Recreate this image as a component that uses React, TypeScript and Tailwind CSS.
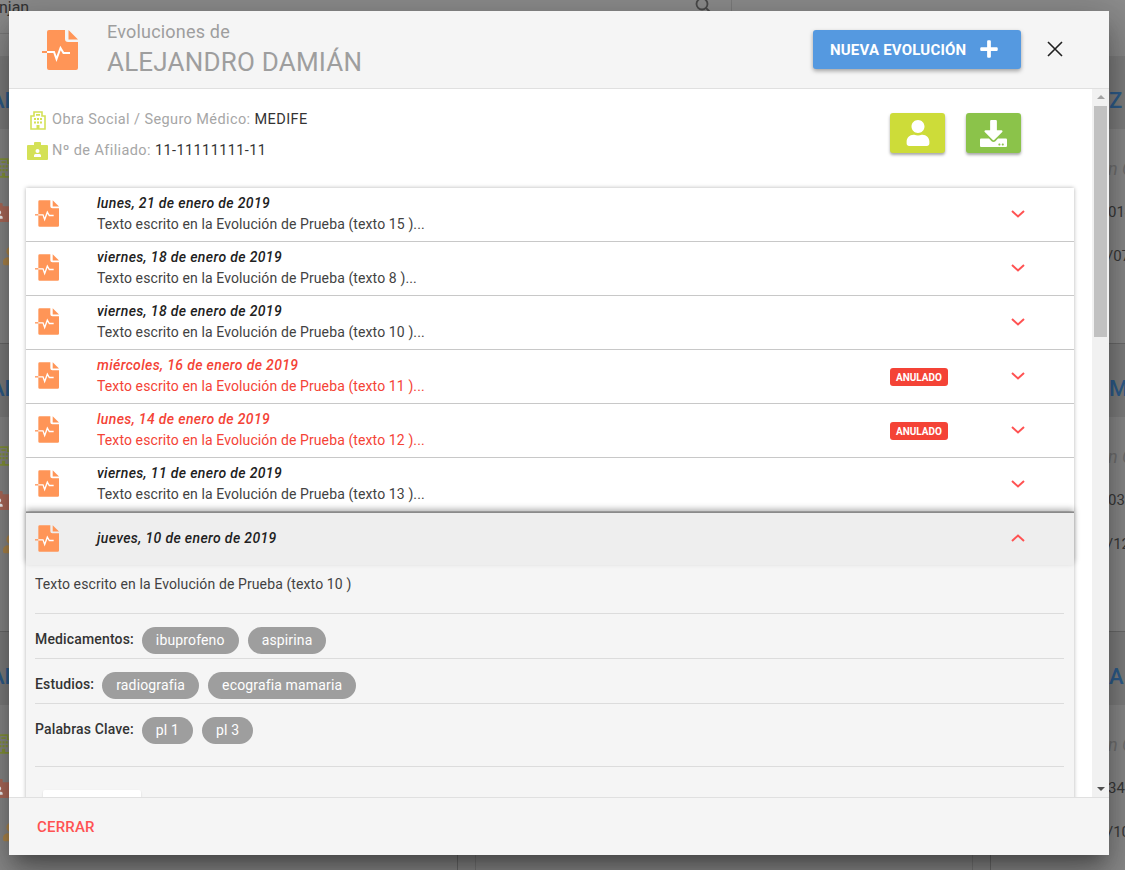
import React from "react";
import { FaDownload, FaUser, FaPlus } from "react-icons/fa";

const font = { fontFamily: "Roboto, 'Liberation Sans', sans-serif" };

function EvoIcon({ className }: { className: string }) {
  return (
    <svg viewBox="0 0 36 40" className={className}>
      <path fill="#ff9557" d="M7 0H23V9a3 3 0 0 0 3 3H36V38a2 2 0 0 1-2 2H7a2 2 0 0 1-2-2V2a2 2 0 0 1 2-2Z" />
      <path fill="#ff9557" d="M26.500 0 36 9.500H26.500Z" />
      <path fill="none" stroke="#ff9557" strokeWidth="2" d="M0 22H5" />
      <path fill="none" stroke="#ffffff" strokeWidth="2" d="M5 22H12L14.500 29 18.500 18 21.500 23H28" />
    </svg>
  );
}

function Building({ className, color }: { className: string; color: string }) {
  return (
    <svg viewBox="0 0 16 19" className={className}>
      <path fill="none" stroke={color} strokeWidth="1.600" d="M1 18V5H4V1H12V5H15V18Z" />
      <path fill={color} d="M4 7h2v2H4zM7 7h2v2H7zM10 7h2v2h-2zM4 10.500h2v2H4zM7 10.500h2v2H7zM10 10.500h2v2h-2zM6.500 14h3v4h-3zM6 3h4v1.800H6z" />
    </svg>
  );
}

function Badge({ className, color }: { className: string; color: string }) {
  return (
    <svg viewBox="0 0 21 18" className={className}>
      <path fill={color} d="M1 3H7V1a1 1 0 0 1 1-1h5a1 1 0 0 1 1 1V3H20a1 1 0 0 1 1 1V17a1 1 0 0 1-1 1H1a1 1 0 0 1-1-1V4a1 1 0 0 1 1-1Z" />
      <circle cx="10.500" cy="9" r="2" fill="#ffffff" />
      <path fill="#ffffff" d="M7 15v-1.500a1.500 1.500 0 0 1 1.500-1.500h4a1.500 1.500 0 0 1 1.500 1.500V15Z" />
    </svg>
  );
}

function Chevron({ up }: { up?: boolean }) {
  return (
    <svg viewBox="0 0 14 8" className="w-[14px] h-[8px]">
      <path fill="none" stroke="#ff5252" strokeWidth="2" d={up ? "M1 7 7 1.500 13 7" : "M1 1 7 6.500 13 1"} />
    </svg>
  );
}

type Item = { date: string; text: string; red?: boolean };
const items: Item[] = [
  { date: "lunes, 21 de enero de 2019", text: "Texto escrito en la Evolución de Prueba (texto 15 )..." },
  { date: "viernes, 18 de enero de 2019", text: "Texto escrito en la Evolución de Prueba (texto 8 )..." },
  { date: "viernes, 18 de enero de 2019", text: "Texto escrito en la Evolución de Prueba (texto 10 )..." },
  { date: "miércoles, 16 de enero de 2019", text: "Texto escrito en la Evolución de Prueba (texto 11 )...", red: true },
  { date: "lunes, 14 de enero de 2019", text: "Texto escrito en la Evolución de Prueba (texto 12 )...", red: true },
  { date: "viernes, 11 de enero de 2019", text: "Texto escrito en la Evolución de Prueba (texto 13 )..." },
];

function Row({ item }: { item: Item }) {
  return (
    <div className="h-[54px] flex items-start border-b border-[#c8c8c8] last:border-b-0 bg-white">
      <EvoIcon className="w-[24px] h-[27px] ml-[9px] mt-[12px] shrink-0" />
      <div className={`ml-[38px] w-[793px] shrink-0 pt-[5px] text-[14px] leading-[21px] tracking-[0.11px] ${item.red ? "text-[#f44336]" : "text-[#424242]"}`}>
        <div className={`italic font-medium tracking-[0.36px] ${item.red ? "" : "text-[#212121]"}`}>{item.date}</div>
        <div>{item.text}</div>
      </div>
      <div className="w-[121px] shrink-0 pt-[18px]">
        {item.red && (
          <span className="flex items-center justify-center w-[58px] h-[18px] rounded-[3px] bg-[#f44336] text-white text-[10px] font-bold">ANULADO</span>
        )}
      </div>
      <div className="pt-[22px] flex"><Chevron /></div>
    </div>
  );
}

function Chip({ children }: { children: React.ReactNode }) {
  return <span className="h-[27px] px-[14px] rounded-[14px] bg-[#9e9e9e] text-white text-[14px] tracking-[0.15px] flex items-center">{children}</span>;
}

function TagRow({ label, tags, h, last }: { label: string; tags: string[]; h: string; last?: boolean }) {
  return (
    <div className={`${h} flex items-start pt-[13px] ${last ? "" : "border-b border-[#dcdcdc]"}`}>
      <span className="text-[14px] font-medium tracking-[0.15px] text-[#333333] leading-[24px] mr-[8px]">{label}</span>
      <div className="flex gap-[9px]">{tags.map((t) => <Chip key={t}>{t}</Chip>)}</div>
    </div>
  );
}

function LeftCard() {
  return (
    <div className="h-[288px] border-b border-[#6e6e6e] border-r overflow-hidden">
      <div className="h-[73px] pt-[32px] bg-[#828282] text-[#2f5f8f] text-[22px] font-medium leading-[26px] -ml-[10px]">AL</div>
      <div className="mt-[17px] flex flex-col">
        <div className="h-[44px] flex items-center -ml-[5px]"><Building className="w-[17px] h-[20px]" color="#8b9a3c" /></div>
        <div className="h-[44px] flex items-center -ml-[12px]"><Badge className="w-[22px] h-[19px]" color="#b56f5e" /></div>
        <div className="h-[44px] flex items-center ml-[3px]"><FaUser className="w-[16px] h-[20px] text-[#b58c4e]" /></div>
      </div>
    </div>
  );
}

function RightCard({ title, a, b }: { title: string; a: string; b: string }) {
  return (
    <div className="h-[288px] border-b border-[#6e6e6e] border-l overflow-hidden">
      <div className="h-[73px] pt-[32px] pl-[118px] bg-[#828282] text-[#2f5f8f] text-[22px] font-medium leading-[26px] whitespace-nowrap">{title}</div>
      <div className="mt-[17px] pl-[117px] text-[15px] text-[#3a3a3a] whitespace-nowrap">
        <div className="h-[44px] flex items-center italic text-[#737373] text-[18px]">n C</div>
        <div className="h-[44px] flex items-center">{a}</div>
        <div className="h-[44px] flex items-center -ml-[1px]">{b}</div>
      </div>
    </div>
  );
}

export default function App() {
  return (
    <div style={font} className="relative w-[1125px] h-[870px] overflow-hidden bg-[#8d8d8d]">
      <div className="h-[56px] flex items-start">
        <div className="w-[732px] h-[34px] border-r border-b border-[#7c7c7c] flex justify-between pr-[20px]">
          <span className="-ml-[1px] text-[16px] leading-[16px] text-[#333333]">njan</span>
          <svg viewBox="0 0 16 16" className="w-[16px] h-[16px] -mt-[3px]">
            <circle cx="7" cy="7" r="5.500" fill="none" stroke="#4a4a4a" strokeWidth="1.800" />
            <path d="M11 11 15 15" stroke="#4a4a4a" strokeWidth="1.800" />
          </svg>
        </div>
      </div>
      <div className="grid grid-cols-[458px_1fr_135px] gap-x-[17px]">
        <div>
          <LeftCard /><LeftCard /><LeftCard />
        </div>
        <div className="border-x border-[#7c7c7c]" />
        <div>
          <RightCard title="Z" a="014" b="/07" />
          <RightCard title="M" a="031" b="/12" />
          <RightCard title="A E" a="34" b="/10" />
        </div>
      </div>

      <div className="absolute left-[9px] top-[11px] w-[1100px] h-[844px] flex flex-col rounded-[2px] bg-white shadow-[0_11px_15px_-7px_rgba(0,0,0,0.3),0_24px_38px_3px_rgba(0,0,0,0.2),0_9px_46px_8px_rgba(0,0,0,0.18)]">
        <header className="h-[78px] shrink-0 bg-[#f5f5f5] border-b border-[#e0e0e0] flex items-start">
          <EvoIcon className="w-[36px] h-[40px] ml-[33px] mt-[19px] shrink-0" />
          <div className="ml-[29px] w-[706px] pt-[10px] shrink-0 text-[#9e9e9e]">
            <div className="text-[18px] leading-[22px] tracking-[0.2px]">Evoluciones de</div>
            <div className="text-[26px] leading-[33px] mt-[3px] tracking-[0.2px]">ALEJANDRO DAMIÁN</div>
          </div>
          <button className="mt-[19px] w-[208px] h-[39px] shrink-0 rounded-[3px] bg-[#5599e0] text-white text-[15px] tracking-[0.2px] font-bold flex items-center pl-[17px] shadow-[0_2px_4px_rgba(0,0,0,0.35)]">
            <span className="pt-[2px]">NUEVA EVOLUCIÓN</span>
            <FaPlus className="ml-[13px] w-[20px] h-[20px] -mt-[1px]" />
          </button>
          <svg viewBox="0 0 16 16" className="w-[16px] h-[16px] ml-[26px] mt-[30px]">
            <path stroke="#212121" strokeWidth="1.600" fill="none" d="M1 1 15 15M15 1 1 15" />
          </svg>
        </header>

        <div className="flex-1 min-h-0 flex">
          <div className="flex-1 min-w-0 overflow-hidden">
            <div className="flex items-start h-[99px]">
              <div className="ml-[18px] w-[863px] shrink-0 text-[14.500px] tracking-[0.4px]">
                <div className="mt-[20px] h-[22px] flex items-center">
                  <Building className="w-[16px] h-[19px] ml-[3px] mr-[6px]" color="#d4e157" />
                  <span className="text-[#a6a6a6]">Obra Social / Seguro Médico:&nbsp;</span>
                  <span className="text-[#333333]">MEDIFE</span>
                </div>
                <div className="mt-[9px] h-[22px] flex items-center">
                  <Badge className="w-[21px] h-[18px] mr-[4px]" color="#d4e157" />
                  <span className="text-[#a6a6a6]">Nº de Afiliado:&nbsp;</span>
                  <span className="text-[#333333]">11-11111111-11</span>
                </div>
              </div>
              <button className="mt-[24px] w-[55px] h-[40px] shrink-0 rounded-[3px] bg-[#cddc39] flex items-center justify-center shadow-[0_2px_3px_rgba(0,0,0,0.35)]">
                <FaUser className="w-[24px] h-[26px] text-white" />
              </button>
              <button className="mt-[24px] ml-[21px] w-[55px] h-[40px] shrink-0 rounded-[3px] bg-[#8bc34a] flex items-center justify-center shadow-[0_2px_3px_rgba(0,0,0,0.35)]">
                <FaDownload className="w-[27px] h-[27px] text-white" />
              </button>
            </div>

            <div className="ml-[17px] w-[1048px] shadow-[0_0_4px_rgba(0,0,0,0.3)]">
              {items.map((it, i) => <Row key={i} item={it} />)}
              <div className="relative h-[53px] flex items-start bg-[#eeeeee] border-t border-[#8a8a8a] shadow-[0_-3px_6px_rgba(0,0,0,0.3)]">
                <EvoIcon className="w-[24px] h-[27px] ml-[9px] mt-[12px] shrink-0" />
                <div className="ml-[38px] w-[914px] shrink-0 pt-[15px] text-[14px] leading-[21px] tracking-[0.36px] italic font-medium text-[#212121]">jueves, 10 de enero de 2019</div>
                <div className="pt-[21px] flex"><Chevron up /></div>
              </div>
              <div className="bg-[#f5f5f5] pl-[9px] pr-[10px] h-[241px]">
                <div className="h-[49px] pt-[9px] text-[14px] leading-[21px] tracking-[0.11px] text-[#424242] border-b border-[#dcdcdc]">Texto escrito en la Evolución de Prueba (texto 10 )</div>
                <TagRow label="Medicamentos:" tags={["ibuprofeno", "aspirina"]} h="h-[45px]" />
                <TagRow label="Estudios:" tags={["radiografia", "ecografia mamaria"]} h="h-[45px]" />
                <div className="h-[63px] border-b border-[#dcdcdc]">
                  <TagRow label="Palabras Clave:" tags={["pl 1", "pl 3"]} h="h-[45px]" last />
                </div>
                <div className="ml-[8px] mt-[23px] w-[98px] h-[40px] rounded-[2px] bg-white shadow-[0_1px_2px_rgba(0,0,0,0.15)]" />
              </div>
            </div>
          </div>

          <div className="w-[17px] shrink-0 bg-[#f1f1f1] flex flex-col items-center">
            <svg viewBox="0 0 8 4" className="w-[8px] h-[4px] mt-[6px]"><path fill="#a3a3a3" d="M4 0 8 4H0Z" /></svg>
            <div className="w-[13px] h-[231px] mt-[7px] bg-[#c1c1c1]" />
            <div className="flex-1" />
            <svg viewBox="0 0 8 4" className="w-[8px] h-[4px] mb-[6px]"><path fill="#505050" d="M0 0H8L4 4Z" /></svg>
          </div>
        </div>

        <footer className="h-[58px] shrink-0 bg-[#f5f5f5] border-t border-[#e0e0e0] flex items-center pl-[28px] pt-[1px]">
          <span className="text-[15px] tracking-[0.2px] font-medium text-[#ff5252]">CERRAR</span>
        </footer>
      </div>
    </div>
  );
}
